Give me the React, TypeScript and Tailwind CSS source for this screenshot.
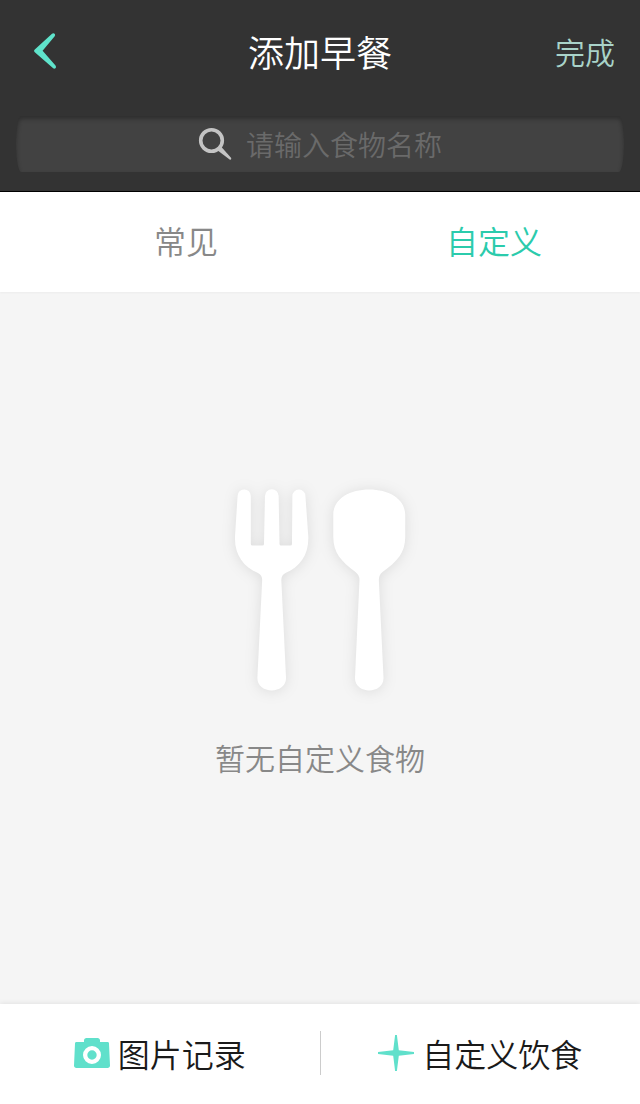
import React, { useState } from 'react';

const BackIcon: React.FC = () => (
  <svg width="22" height="36" viewBox="0 0 22 36" fill="#5fe3cb" aria-hidden="true">
    <path d="M18 .8C19.900-.8 22 1.500 20.700 3.200L8.600 17.800 21.500 32.600c1.400 1.900-.6 3.900-2.300 2.700L.8 19.200c-1-.9-1-1.900 0-2.800Z" />
  </svg>
);

const SearchIcon: React.FC = () => (
  <svg width="34" height="34" viewBox="0 0 34 34" aria-hidden="true">
    <circle cx="13.5" cy="13.5" r="10.8" fill="none" stroke="#c4c4c4" strokeWidth="3.6" />
    <path d="M19.4 23.2 23 19.4l10 11.4c.8 1.1-.2 2.5-1.4 1.6Z" fill="#c4c4c4" />
  </svg>
);

const CutleryIcon: React.FC = () => (
  <svg
    width="200"
    height="230"
    viewBox="0 0 200 230"
    fill="#fff"
    className="drop-shadow-[0_1px_7px_rgba(0,0,0,0.1)]"
    aria-hidden="true"
  >
    <path d="M17.600 21A6.600 6.600 0 0 1 30.800 21V69a1.500 1.500 0 0 0 1.500 1.500H42.500A1.500 1.500 0 0 0 44 69L45 21A6.800 6.800 0 0 1 58.600 21L59.500 69a1.500 1.500 0 0 0 1.500 1.500h9.500A1.500 1.500 0 0 0 72 69L72.400 21A6.500 6.500 0 0 1 85.400 21L88.300 62C88.700 80 80 91.500 65.500 98Q61.300 100 61.300 105L66 203C66 219.500 37.400 219.500 37.400 203L42.200 105Q42.200 100 38 98C23.500 91.500 14.500 80 15 62Z" />
    <path d="M113.300 40C113.300 23 131 14.600 149.200 14.600S185.200 23 185.200 40V62C185 78 177.500 86 162.500 97Q158.700 100 158.800 105L163.500 203C163.500 219.500 135 219.500 135 203L139.500 105Q139.500 100 135.500 97C121 86 113.500 78 113.300 62Z" />
  </svg>
);

const CameraIcon: React.FC = () => (
  <svg width="36" height="32" viewBox="0 0 36 32" aria-hidden="true">
    <path
      fill="#60e0cb"
      fillRule="evenodd"
      d="M2.500 5H10V3.500C10 2 11 1 12.500 1h11C25 1 26 2 26 3.500V5h7.500c1 0 1.500.6 1.500 1.600L36 28.500c0 1.600-.9 2.500-2.500 2.500h-31C.9 31 0 30.100 0 28.500L1 6.600C1 5.600 1.500 5 2.500 5ZM18 9a9 9 0 1 0 0 18 9 9 0 0 0 0-18Zm0 4.300a4.700 4.700 0 1 1 0 9.400 4.700 4.700 0 0 1 0-9.400Z"
    />
  </svg>
);

const PlusIcon: React.FC = () => (
  <svg width="36" height="36" viewBox="0 0 36 36" fill="#60e0cb" aria-hidden="true">
    <path d="M17.100 0h1.800L20.800 15.200 36 17.100v1.800L20.800 20.800 18.900 36h-1.800L15.200 20.800 0 18.900v-1.800L15.200 15.200Z" />
  </svg>
);

export default function App() {
  const [activeTab, setActiveTab] = useState<'common' | 'custom'>('custom');
  const [keyword, setKeyword] = useState('');

  const tabColor = (tab: string) => (activeTab === tab ? 'text-[#2bcbac]' : 'text-[#888888]');

  return (
    <div className="flex min-h-screen flex-col bg-[#f5f5f5] font-['Noto_Sans_CJK_SC',sans-serif] font-[350]">
      <header className="border-b border-black bg-[#333333] px-4 pb-[19px]">
        <div className="grid h-29 grid-cols-3 items-center pb-3.5">
          <button type="button" aria-label="返回" className="justify-self-start pl-[18px]">
            <BackIcon />
          </button>
          <h1 className="text-center text-4xl text-white">添加早餐</h1>
          <button type="button" className="justify-self-end pr-[9px] text-[30px] text-[#a9d3c9]">
            完成
          </button>
        </div>

        <label className="flex h-14 items-center justify-center gap-3.5 rounded-[5px/28px] bg-[#424242] shadow-[inset_0_3px_4px_rgba(0,0,0,0.3)]">
          <SearchIcon />
          <input
            type="text"
            aria-label="食物名称"
            placeholder="请输入食物名称"
            className="w-[196px] bg-transparent text-[28px] text-white outline-none placeholder:text-[#6a6a6a]"
            value={keyword}
            onChange={(e) => setKeyword(e.target.value)}
          />
        </label>
      </header>

      <nav className="flex h-25 bg-white text-[32px] shadow-[0_1px_2px_rgba(0,0,0,0.04)]">
        <button
          type="button"
          className={`w-1/2 pb-1 pl-13 ${tabColor('common')}`}
          onClick={() => setActiveTab('common')}
        >
          常见
        </button>
        <button
          type="button"
          className={`w-1/2 pb-1 pl-7 ${tabColor('custom')}`}
          onClick={() => setActiveTab('custom')}
        >
          自定义
        </button>
      </nav>

      {/* Empty state */}
      <main className="flex flex-1 flex-col items-center justify-center gap-8 pb-11">
        <CutleryIcon />
        <p className="text-[30px] leading-10 text-[#888888]">暂无自定义食物</p>
      </main>

      <footer className="flex h-25 items-center bg-white pb-0.5 text-[32px] text-[#1a1a1a] shadow-[0_-1px_5px_rgba(0,0,0,0.08)]">
        <button type="button" className="flex flex-1 items-center justify-center gap-2">
          <CameraIcon />
          图片记录
        </button>
        <div className="h-11 w-px bg-[#cccccc]" />
        <button type="button" className="flex flex-1 items-center justify-center gap-2">
          <PlusIcon />
          自定义饮食
        </button>
      </footer>
    </div>
  );
}
